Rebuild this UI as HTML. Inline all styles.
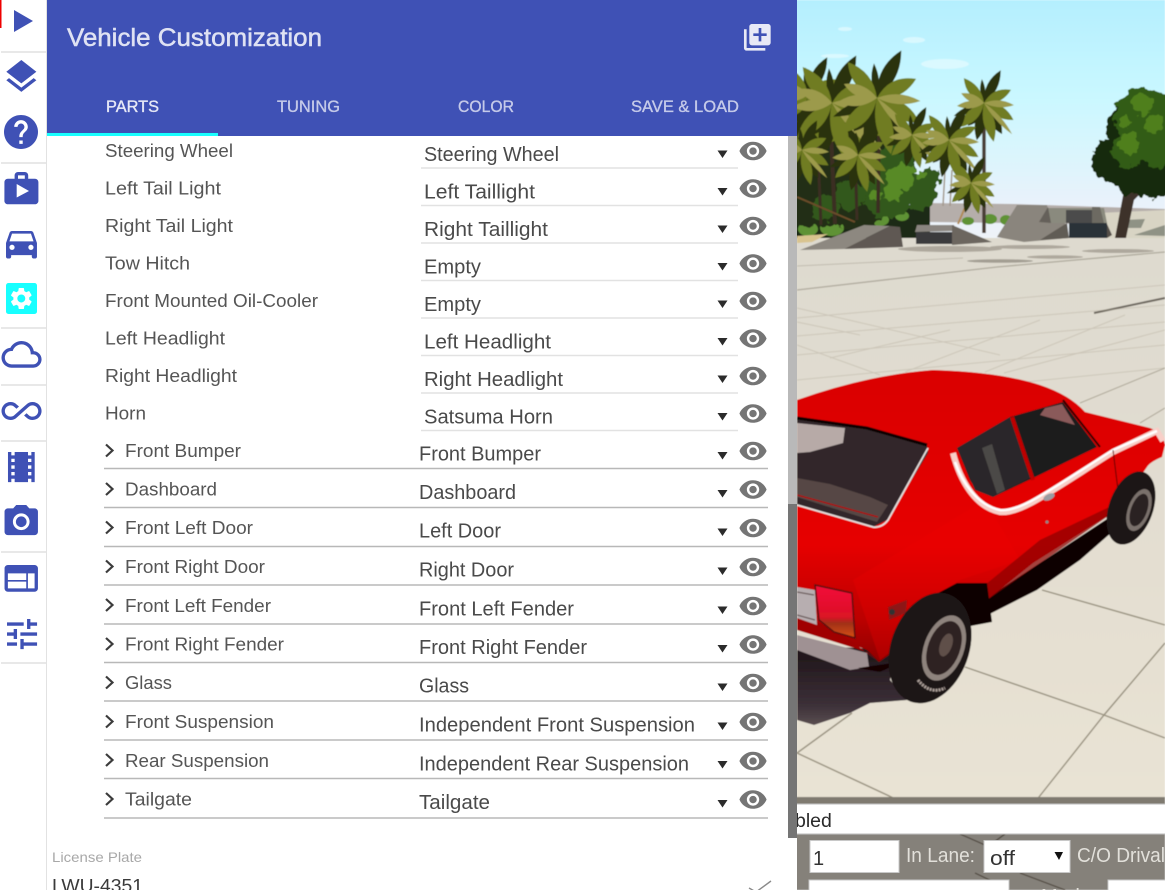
<!DOCTYPE html>
<html><head><meta charset="utf-8"><title>Vehicle Customization</title>
<style>
html,body{margin:0;padding:0;background:#fff;width:1165px;height:890px;overflow:hidden}
svg{display:block}
text{font-family:"Liberation Sans",Arial,sans-serif}
.l{font-size:18.6px;fill:#555}
.v{font-size:20px;fill:#4a4a4a}
.t{font-size:17px;fill:#c5cae9;stroke:#c5cae9;stroke-width:.35}
.i{fill:#3f51b5}
.a{fill:#2b2b2b}
.ln{stroke:#b8b8b8;stroke-width:1.5}
.ls{stroke:#e2e2e2;stroke-width:1.5}
.c{fill:none;stroke:#3c3c3c;stroke-width:2.2}
</style></head><body>
<svg width="1165" height="890" viewBox="0 0 1165 890" xmlns="http://www.w3.org/2000/svg">
<defs>
<linearGradient id="sky" x1="0" y1="0" x2="0" y2="1"><stop offset="0" stop-color="#b4effe"/><stop offset=".42" stop-color="#cbf8ff"/><stop offset=".85" stop-color="#e9f2fb"/><stop offset="1" stop-color="#eef3f8"/></linearGradient>
<linearGradient id="gr" x1="0" y1="0" x2="0" y2="1"><stop offset="0" stop-color="#dedacf"/><stop offset=".35" stop-color="#e1dcd0"/><stop offset="1" stop-color="#e9e3d4"/></linearGradient>
<linearGradient id="red" x1="0" y1="0" x2="0" y2="1"><stop offset="0" stop-color="#da0000"/><stop offset=".6" stop-color="#e60000"/><stop offset=".85" stop-color="#bc0000"/><stop offset="1" stop-color="#8e0000"/></linearGradient>
<linearGradient id="tl" x1="0" y1="0" x2="0" y2="1"><stop offset="0" stop-color="#f2103a"/><stop offset=".6" stop-color="#dc1226"/><stop offset=".72" stop-color="#a03018"/><stop offset="1" stop-color="#d85010"/></linearGradient>
<linearGradient id="sh" x1="0" y1="0" x2="0" y2="1"><stop offset="0" stop-color="#1c1216"/><stop offset=".75" stop-color="#3c3038"/><stop offset="1" stop-color="#5a4e50"/></linearGradient>
<filter id="soft" x="0" y="0" width="1" height="1"><feGaussianBlur stdDeviation=".6"/></filter>
<filter id="rough" filterUnits="userSpaceOnUse" x="780" y="40" width="400" height="210"><feTurbulence type="fractalNoise" baseFrequency=".14" numOctaves="2" seed="4"/><feDisplacementMap in="SourceGraphic" scale="11" xChannelSelector="R" yChannelSelector="G"/></filter>
<g id="eye"><path transform="translate(-14.8,-14.8) scale(1.235)" fill="#757575" d="M12 4.5C7 4.5 2.73 7.61 1 12c1.73 4.39 6 7.5 11 7.5s9.27-3.11 11-7.5c-1.73-4.39-6-7.5-11-7.5zM12 17c-2.76 0-5-2.24-5-5s2.24-5 5-5 5 2.24 5 5-2.24 5-5 5zm0-8c-1.66 0-3 1.34-3 3s1.34 3 3 3 3-1.34 3-3-1.34-3-3-3z"/></g>
<path id="f" d="M0 0Q20 -9 40 0Q20 8 0 0Z"/>
<g id="palm">
<g fill="#2a3110">
<use href="#f" transform="rotate(-63) scale(.92,1.2)"/><use href="#f" transform="rotate(157) scale(.82)"/><use href="#f" transform="rotate(101) scale(.95,1.3)"/><use href="#f" transform="rotate(60) scale(.9,1.3)"/><use href="#f" transform="rotate(-95) scale(.6)"/><use href="#f" transform="rotate(125) scale(.7,1.3)"/>
</g>
<g fill="#6f7c22">
<use href="#f" transform="rotate(-26) scale(.75,1.2)"/><use href="#f" transform="rotate(30) scale(.85,1.3)"/><use href="#f" transform="rotate(-129) scale(.8,1.2)"/><use href="#f" transform="rotate(76) scale(1,1.3)"/><use href="#f" transform="rotate(135) scale(.85,1.3)"/>
</g>
<g fill="#9c9a4c">
<use href="#f" transform="rotate(4) scale(.75,.8)"/><use href="#f" transform="rotate(174) scale(.68,.9)"/><use href="#f" transform="rotate(-157) scale(.62,.9)"/><use href="#f" transform="rotate(48) scale(1.05,.6)"/>
</g>
</g>
</defs>

<!-- scene -->
<g filter="url(#soft)">
<rect x="790" y="0" width="375" height="240" fill="url(#sky)"/>
<g fill="#e3fbff" opacity=".75"><ellipse cx="845" cy="29" rx="7" ry="2"/><ellipse cx="914" cy="40" rx="11" ry="3"/><ellipse cx="835" cy="56" rx="14" ry="2"/><ellipse cx="945" cy="64" rx="24" ry="5"/></g>
<polygon points="928,203 1014,204 1165,209 1165,225 928,222" fill="#b5aeaa"/>
<polygon points="1075,214 1165,210 1165,242 1075,242" fill="#d8d4c4"/>
<polygon points="1124,220 1145,219 1141,228 1120,228" fill="#8f9285"/>
<polygon points="1134,235 1165,225 1165,236" fill="#8f9285"/>
<rect x="790" y="238" width="375" height="565" fill="url(#gr)"/>

<!-- forest mass -->
<g fill="#1f2a14"><rect x="790" y="205" width="140" height="33"/></g>
<g fill="#5f9234">
<ellipse cx="808" cy="229" rx="10" ry="7"/><ellipse cx="832" cy="228" rx="12" ry="8"/><ellipse cx="858" cy="222" rx="8" ry="6"/><ellipse cx="880" cy="220" rx="9" ry="6"/><ellipse cx="902" cy="216" rx="7" ry="5"/><ellipse cx="968" cy="221" rx="6" ry="4"/><ellipse cx="990" cy="219" rx="7" ry="5"/><ellipse cx="1006" cy="220" rx="6" ry="5"/>
</g>
<polygon points="797,236 828,234 812,242 797,243" fill="#d9c48f"/>
<g filter="url(#rough)">
<g fill="#232e16">
<rect x="790" y="110" width="60" height="115"/>
<circle cx="830" cy="140" r="36"/><circle cx="870" cy="150" r="36"/><circle cx="815" cy="195" r="32"/><circle cx="855" cy="198" r="32"/><circle cx="900" cy="150" r="20"/>
</g>
<g fill="#33581a">
<circle cx="895" cy="165" r="20"/><circle cx="888" cy="192" r="26"/><circle cx="918" cy="192" r="18"/><circle cx="850" cy="195" r="15"/><circle cx="825" cy="208" r="13"/><circle cx="930" cy="178" r="10"/>
</g>
<g fill="#588a28">
<circle cx="900" cy="178" r="14"/><circle cx="893" cy="192" r="9"/><circle cx="908" cy="172" r="7"/><circle cx="875" cy="196" r="6"/><circle cx="922" cy="175" r="4"/>
</g>
</g>
<!-- trunks -->
<g stroke="#3b2e20" fill="none">
<path d="M830 110L835 224" stroke-width="4"/><path d="M879 130L878 213" stroke-width="3.5"/><path d="M817 130L821 225" stroke-width="3"/><path d="M855 150L857 220" stroke-width="3"/>
<path d="M984 120L984 233" stroke-width="3.5" stroke="#4a3e34"/>
<path d="M945 170L943 206M952 170L950 206" stroke-width="1.5" stroke="#a3998c"/><path d="M966 205L958 224" stroke-width="2" stroke="#b08a56"/>
<path d="M797 197L855 222" stroke-width="2" stroke="#6a4c2a"/>
</g>
<use href="#palm" transform="translate(800,112) scale(1)"/>
<use href="#palm" transform="translate(852,118) scale(1.05)"/>
<use href="#palm" transform="translate(808,95) scale(1.15)"/>
<use href="#palm" transform="translate(832,103) scale(1.45)"/>
<use href="#palm" transform="translate(877,98) scale(1.45)"/>
<use href="#palm" transform="translate(802,150) scale(.9)"/>
<use href="#palm" transform="translate(858,155) scale(.95)"/>
<use href="#palm" transform="translate(912,135) scale(.85)"/>
<use href="#palm" transform="translate(984,103) scale(1)"/>
<use href="#palm" transform="translate(949,140) scale(1)"/>
<use href="#palm" transform="translate(971,183) scale(.8)"/>
<!-- right tree -->
<path d="M1126 180L1115 238L1126 238L1134 200L1146 188Z" fill="#3e332b"/>
<g filter="url(#rough)">
<g fill="#182a0a"><circle cx="1116" cy="160" r="24"/><circle cx="1150" cy="172" r="26"/><circle cx="1140" cy="130" r="34"/><circle cx="1128" cy="180" r="14"/><circle cx="1164" cy="135" r="30"/></g>
<g fill="#335c14"><circle cx="1144" cy="118" r="30"/><circle cx="1128" cy="150" r="17"/><circle cx="1158" cy="150" r="18"/></g>
<g fill="#4f7f1f"><circle cx="1130" cy="143" r="11"/><circle cx="1142" cy="104" r="11"/><circle cx="1154" cy="125" r="9"/><circle cx="1125" cy="122" r="6"/></g>
</g>
<!-- ramps -->
<polygon points="800,250 864,225 890,226 844,249" fill="#8d8880"/>
<polygon points="844,249 890,226 900,227 903,247" fill="#5e5853"/>
<polygon points="917,225 954,225 955,231 915,232" fill="#8a8580"/>
<polygon points="916,232 952,232 952,244 916,244" fill="#3a3a3e"/>
<polygon points="952,225 992,242 952,245" fill="#6c665f"/>
<polygon points="1047,208 1104,208 1107,223 1050,223" fill="#8a8a7e"/>
<rect x="1066" y="210" width="26" height="13" fill="#4b4b4c"/>
<polygon points="1092,207 1100,207 1104,223 1092,223" fill="#6d6a62"/>
<rect x="1069" y="223" width="38" height="15" fill="#2b3038"/>
<polygon points="1107,224 1112,235 1107,238" fill="#55504a"/>
<polygon points="997,237 1017,205 1047,205 1050,223 1065,223 1069,238 1024,242" fill="#8a857d"/>
<polygon points="1039,222 1048,207 1051,223" fill="#65605a"/>
<polygon points="1040,240 1067,223 1069,238" fill="#615c55"/>
<g fill="#9a9488" opacity=".7"><ellipse cx="950" cy="249" rx="52" ry="3"/><ellipse cx="1030" cy="247" rx="40" ry="2"/><ellipse cx="1000" cy="261" rx="33" ry="1.8" fill="#8b867b"/><ellipse cx="1055" cy="257" rx="28" ry="1.8"/><ellipse cx="1118" cy="251" rx="36" ry="2"/></g>
<!-- far lines -->
<g fill="none" stroke="#a39d90">
<path d="M797 290L997 267L1165 252" stroke-width="1.3" opacity=".8"/>
<path d="M797 266L963 258" stroke-width="1" opacity=".5"/>
<path d="M1094 313L1165 298" stroke="#6d685e" stroke-width="2"/>
</g>
<g fill="none" stroke="#b0a999" stroke-width="1" opacity=".4">
<path d="M797 318L1165 285M797 336L1165 305M797 355L1165 322M797 380L1165 345M797 405L1165 368M880 375L797 345M1000 355L797 308"/>
<path d="M860 335L797 322M950 330L830 358M1040 320L905 372M1125 315L985 372M1165 330L1004 373"/>
</g>
<g fill="none" stroke="#9d9686" stroke-width="1.1" opacity=".7"><path d="M1080 403L1165 368M1140 423L1165 408"/></g>
<!-- lower tiles -->
<g stroke="#8a8270" stroke-width="1.4" fill="none" opacity=".85">
<path d="M1042 590L1165 625M965 667L1104 715L1165 738M1165 643L1104 715L1035 802M852 713L797 753L902 802"/>
</g>
<!-- shadow -->
<polygon points="797,645 895,650 890,680 907,700 870,703 850,713 814,725 797,720" fill="url(#sh)"/>
<polygon points="987,598 1040,563 1110,517 1120,525 1080,560 1037,590 972,623 960,605" fill="#0c0303"/>
<!-- car -->
<path d="M797 400Q867 375 933 370Q1000 372 1040 385Q1070 395 1085 412L1150 428Q1163 433 1165 445L1162 457Q1150 462 1147 467L1117 510L1033 563L987 600L984 583L957 583L930 605L910 640L879 662L867 650L797 623Z" fill="url(#red)"/>
<polygon points="797,610 850,640 879,662 867,652 797,630" fill="#a00000"/>
<polygon points="853,580 985,500 1020,560 960,580 930,600 905,640 880,660" fill="#f00000" opacity=".3"/>
<polygon points="987,600 1117,510 1124,500 1040,540 985,585" fill="#8a0000" opacity=".7"/>
<polygon points="925,600 957,583 987,583 992,622 960,628" fill="#090202"/>
<!-- rear window -->
<polygon points="797,418 867,428 927,445 928,453 887,520 873,527 797,505" fill="#30282a"/>
<polygon points="797,423 845,428 843,443 810,452 797,453" fill="#b7aaa7"/>
<polygon points="797,478 830,484 870,497 888,505 877,522 797,497" fill="#564744"/>
<path d="M797 495L878 517" stroke="#b00000" stroke-width="1.3"/>
<path d="M797 418L867 428L927 445" stroke="#0c0606" stroke-width="3" fill="none"/>
<path d="M928 448L888 520Q882 528 873 527L797 505" stroke="#e5dfdd" stroke-width="1.8" fill="none"/>
<!-- side window -->
<path d="M957 448L1010 417L1063 402L1097 447L1033 478L993 497Q975 490 970 480Z" fill="#1f1a1b"/>
<polygon points="957,448 1010,417 1030,478 993,497 975,490" fill="#2c2829"/>
<polygon points="982,448 992,444 1005,490 997,494" fill="#4c4846"/>
<polygon points="1045,408 1062,404 1075,425 1040,415" fill="#8a5a5a"/>
<path d="M1012 417L1033 480" stroke="#bf0000" stroke-width="4"/>
<path d="M1063 400L1100 447" stroke="#2a0000" stroke-width="2"/>
<!-- stripe -->
<path d="M953 453C960 480 975 507 1000 512C1020 514 1045 495 1113 452L1157 431L1163 441" fill="none" stroke="#f8cfc8" stroke-width="6"/>
<path d="M955 462C962 482 977 505 1000 510C1020 512 1045 493 1113 450L1157 431" fill="none" stroke="#fff" stroke-width="2.5"/>
<path d="M1113 450L1118 490L1115 510" fill="none" stroke="#5a0000" stroke-width="1"/>
<ellipse cx="1049" cy="497" rx="6" ry="3" transform="rotate(-25 1049 497)" fill="#9a9aa0"/>
<circle cx="1047" cy="522" r="1.5" fill="#888"/>
<!-- rear -->
<polygon points="797,587 815,590 817,625 797,618" fill="#b7aeb0"/>
<path d="M797 592L814 595M797 615L815 620" stroke="#6a5a5a" stroke-width="1.2"/>
<polygon points="815,585 852,593 855,638 834,632 819,620" fill="url(#tl)" stroke="#5a1010" stroke-width="1.5"/>
<polygon points="797,635 867,653 869,667 850,670 797,650" fill="#9f9193"/>
<polygon points="888,607 907,600 906,613 889,620" fill="#8d1515"/>
<circle cx="892" cy="612" r="3" fill="#333"/>
<polygon points="858,668 900,662 911,643 905,660 880,672" fill="#130404"/>
<!-- wheels -->
<ellipse cx="930" cy="648" rx="39" ry="57" transform="rotate(20 930 648)" fill="#1c1212"/>
<ellipse cx="944" cy="648" rx="20" ry="34" transform="rotate(20 944 648)" fill="#8e837d"/>
<ellipse cx="944" cy="648" rx="16" ry="28" transform="rotate(20 944 648)" fill="#2e2120"/>
<ellipse cx="946" cy="645" rx="6" ry="12" transform="rotate(20 946 645)" fill="#5e4f4a"/>
<path d="M918 680Q930 695 945 688" stroke="#a89c96" stroke-width="3" fill="none" stroke-dasharray="2 1"/>
<ellipse cx="1131" cy="508" rx="22" ry="38" transform="rotate(20 1131 508)" fill="#1d1515"/>
<ellipse cx="1139" cy="510" rx="11" ry="22" transform="rotate(20 1139 510)" fill="#7a716c"/>
<ellipse cx="1139" cy="510" rx="8" ry="17" transform="rotate(20 1139 510)" fill="#2c2424"/>
<!-- lower grey -->
<rect x="790" y="797" width="375" height="7" fill="#7f7a70"/>
<rect x="790" y="834" width="375" height="56" fill="#85817a"/>
<g stroke="#4a4238" stroke-width="1.2" fill="none"><path d="M960 834L985 845M1005 834L990 845M975 873L1000 885M1020 873L1065 890"/></g>
</g>

<!-- page controls on scene -->
<rect x="790" y="804" width="375" height="30" fill="#fff"/>
<path d="M790 804H1165M790 834H1165" stroke="#bbb" stroke-width="1"/>
<text x="756" y="827" font-size="19.5" fill="#2a2a2a">Disabled</text>
<rect x="810" y="840.5" width="89" height="32" fill="#fff" stroke="#c8c8c8"/>
<text x="813" y="865" font-size="20" fill="#333">1</text>
<text x="906" y="862" font-size="20" fill="#e2e0da" textLength="69" lengthAdjust="spacingAndGlyphs">In Lane:</text>
<rect x="984" y="840.5" width="86" height="32" fill="#fff" stroke="#c8c8c8"/>
<text x="990" y="865" font-size="20" fill="#333" textLength="25" lengthAdjust="spacingAndGlyphs">off</text>
<polygon points="1054.5,852 1063,852 1059,860" fill="#111"/>
<text x="1077" y="862" font-size="20" fill="#e2e0da" textLength="88" lengthAdjust="spacingAndGlyphs">C/O Drival</text>
<rect x="809" y="880" width="200" height="12" fill="#fff" stroke="#c8c8c8"/>
<text x="1041" y="903" font-size="20" fill="#e2e0da">Mode:</text>
<rect x="1108" y="880" width="60" height="12" fill="#fff" stroke="#c8c8c8"/>

<!-- panel -->
<rect x="47" y="0" width="750" height="890" fill="#fff"/>
<rect x="47" y="0" width="750" height="136" fill="#3f51b5"/>
<text x="67" y="46" font-size="25" fill="#dfe2f3" stroke="#dfe2f3" stroke-width=".5" textLength="255" lengthAdjust="spacingAndGlyphs">Vehicle Customization</text>
<path transform="translate(741.3,21.3) scale(1.335)" fill="#e8e9f6" d="M4 6H2v14c0 1.1.9 2 2 2h14v-2H4V6zm16-4H8c-1.1 0-2 .9-2 2v12c0 1.1.9 2 2 2h12c1.1 0 2-.9 2-2V4c0-1.1-.9-2-2-2zm-1 9h-4v4h-2v-4H9V9h4V5h2v4h4v2z"/>
<text x="106" y="112" class="t" style="fill:#e6e8f6;stroke:#e6e8f6" textLength="53" lengthAdjust="spacingAndGlyphs">PARTS</text>
<text x="277" y="112" class="t" textLength="63" lengthAdjust="spacingAndGlyphs">TUNING</text>
<text x="458" y="112" class="t" textLength="56" lengthAdjust="spacingAndGlyphs">COLOR</text>
<text x="631" y="112" class="t" textLength="108" lengthAdjust="spacingAndGlyphs">SAVE &amp; LOAD</text>
<rect x="47" y="133" width="171" height="3" fill="#18ffff"/>

<!-- scrollbar -->
<rect x="788" y="136" width="9" height="368" fill="#b9b9b9"/>
<rect x="788" y="504" width="9" height="334" fill="#757575"/>

<!-- simple rows -->
<text x="105" y="157" class="l" textLength="128" lengthAdjust="spacingAndGlyphs">Steering Wheel</text>
<text x="105" y="194.5" class="l" textLength="116" lengthAdjust="spacingAndGlyphs">Left Tail Light</text>
<text x="105" y="232" class="l" textLength="128" lengthAdjust="spacingAndGlyphs">Right Tail Light</text>
<text x="105" y="269.5" class="l" textLength="85" lengthAdjust="spacingAndGlyphs">Tow Hitch</text>
<text x="105" y="307" class="l" textLength="213" lengthAdjust="spacingAndGlyphs">Front Mounted Oil-Cooler</text>
<text x="105" y="344.5" class="l" textLength="120" lengthAdjust="spacingAndGlyphs">Left Headlight</text>
<text x="105" y="382" class="l" textLength="132" lengthAdjust="spacingAndGlyphs">Right Headlight</text>
<text x="105" y="419.5" class="l" textLength="41" lengthAdjust="spacingAndGlyphs">Horn</text>

<text x="424" y="161" class="v" textLength="135" lengthAdjust="spacingAndGlyphs">Steering Wheel</text>
<text x="424" y="198.5" class="v" textLength="111" lengthAdjust="spacingAndGlyphs">Left Taillight</text>
<text x="424" y="236" class="v" textLength="124" lengthAdjust="spacingAndGlyphs">Right Taillight</text>
<text x="424" y="273.5" class="v" textLength="57" lengthAdjust="spacingAndGlyphs">Empty</text>
<text x="424" y="311" class="v" textLength="57" lengthAdjust="spacingAndGlyphs">Empty</text>
<text x="424" y="348.5" class="v" textLength="127" lengthAdjust="spacingAndGlyphs">Left Headlight</text>
<text x="424" y="386" class="v" textLength="139" lengthAdjust="spacingAndGlyphs">Right Headlight</text>
<text x="424" y="423.5" class="v" textLength="129" lengthAdjust="spacingAndGlyphs">Satsuma Horn</text>

<path class="ls" d="M421 168H738M421 205.5H738M421 243H738M421 280.5H738M421 318H738M421 355.5H738M421 393H738M421 430.5H738"/>

<!-- expansion rows -->
<text x="125" y="457" class="l" textLength="116" lengthAdjust="spacingAndGlyphs">Front Bumper</text>
<text x="125" y="495.5" class="l" textLength="92" lengthAdjust="spacingAndGlyphs">Dashboard</text>
<text x="125" y="534" class="l" textLength="128" lengthAdjust="spacingAndGlyphs">Front Left Door</text>
<text x="125" y="573" class="l" textLength="140" lengthAdjust="spacingAndGlyphs">Front Right Door</text>
<text x="125" y="612" class="l" textLength="146" lengthAdjust="spacingAndGlyphs">Front Left Fender</text>
<text x="125" y="650.5" class="l" textLength="159" lengthAdjust="spacingAndGlyphs">Front Right Fender</text>
<text x="125" y="689" class="l" textLength="47" lengthAdjust="spacingAndGlyphs">Glass</text>
<text x="125" y="728" class="l" textLength="149" lengthAdjust="spacingAndGlyphs">Front Suspension</text>
<text x="125" y="767" class="l" textLength="144" lengthAdjust="spacingAndGlyphs">Rear Suspension</text>
<text x="125" y="805.5" class="l" textLength="67" lengthAdjust="spacingAndGlyphs">Tailgate</text>

<text x="419" y="460.5" class="v" textLength="122" lengthAdjust="spacingAndGlyphs">Front Bumper</text>
<text x="419" y="499" class="v" textLength="97" lengthAdjust="spacingAndGlyphs">Dashboard</text>
<text x="419" y="537.5" class="v" textLength="82" lengthAdjust="spacingAndGlyphs">Left Door</text>
<text x="419" y="576.5" class="v" textLength="95" lengthAdjust="spacingAndGlyphs">Right Door</text>
<text x="419" y="615.5" class="v" textLength="155" lengthAdjust="spacingAndGlyphs">Front Left Fender</text>
<text x="419" y="654" class="v" textLength="168" lengthAdjust="spacingAndGlyphs">Front Right Fender</text>
<text x="419" y="692.5" class="v" textLength="50" lengthAdjust="spacingAndGlyphs">Glass</text>
<text x="419" y="731.5" class="v" textLength="276" lengthAdjust="spacingAndGlyphs">Independent Front Suspension</text>
<text x="419" y="770.5" class="v" textLength="270" lengthAdjust="spacingAndGlyphs">Independent Rear Suspension</text>
<text x="419" y="809" class="v" textLength="71" lengthAdjust="spacingAndGlyphs">Tailgate</text>

<path class="ln" d="M104 468.5H768M104 507.5H768M104 546.5H768M104 585H768M104 624H768M104 662.5H768M104 701H768M104 740H768M104 778.5H768M104 818H768"/>

<g class="c">
<polyline points="106,444.5 112.5,450.5 106,456.5"/>
<polyline points="106,483 112.5,489 106,495"/>
<polyline points="106,521.5 112.5,527.5 106,533.5"/>
<polyline points="106,560.5 112.5,566.5 106,572.5"/>
<polyline points="106,599 112.5,605 106,611"/>
<polyline points="106,638 112.5,644 106,650"/>
<polyline points="106,676.5 112.5,682.5 106,688.5"/>
<polyline points="106,715.5 112.5,721.5 106,727.5"/>
<polyline points="106,754 112.5,760 106,766"/>
<polyline points="106,793 112.5,799 106,805"/>
</g>

<!-- arrows -->
<g class="a">
<polygon points="717.5,150.5 727.5,150.5 722.5,158"/>
<polygon points="717.5,188 727.5,188 722.5,195.5"/>
<polygon points="717.5,225.5 727.5,225.5 722.5,233"/>
<polygon points="717.5,263 727.5,263 722.5,270.5"/>
<polygon points="717.5,300.5 727.5,300.5 722.5,308"/>
<polygon points="717.5,338 727.5,338 722.5,345.5"/>
<polygon points="717.5,375.5 727.5,375.5 722.5,383"/>
<polygon points="717.5,413 727.5,413 722.5,420.5"/>
<polygon points="717.5,452 727.5,452 722.5,459.5"/>
<polygon points="717.5,490 727.5,490 722.5,497.5"/>
<polygon points="717.5,528.5 727.5,528.5 722.5,536"/>
<polygon points="717.5,567.5 727.5,567.5 722.5,575"/>
<polygon points="717.5,606.5 727.5,606.5 722.5,614"/>
<polygon points="717.5,645 727.5,645 722.5,652.5"/>
<polygon points="717.5,683.5 727.5,683.5 722.5,691"/>
<polygon points="717.5,722.5 727.5,722.5 722.5,730"/>
<polygon points="717.5,761 727.5,761 722.5,768.5"/>
<polygon points="717.5,800 727.5,800 722.5,807.5"/>
</g>

<!-- eyes -->
<use href="#eye" x="753" y="151"/><use href="#eye" x="753" y="188.5"/><use href="#eye" x="753" y="226"/><use href="#eye" x="753" y="263.5"/><use href="#eye" x="753" y="301"/><use href="#eye" x="753" y="338.5"/><use href="#eye" x="753" y="376"/><use href="#eye" x="753" y="413.5"/>
<use href="#eye" x="753" y="451"/><use href="#eye" x="753" y="489.5"/><use href="#eye" x="753" y="528"/><use href="#eye" x="753" y="567"/><use href="#eye" x="753" y="606"/><use href="#eye" x="753" y="644.5"/><use href="#eye" x="753" y="683"/><use href="#eye" x="753" y="722"/><use href="#eye" x="753" y="761"/><use href="#eye" x="753" y="799.5"/>

<!-- license plate -->
<text x="52" y="862" font-size="14" fill="#a8a8a8" textLength="90" lengthAdjust="spacingAndGlyphs">License Plate</text>
<text x="52" y="892" font-size="18.6" fill="#3a3a3a" textLength="91" lengthAdjust="spacingAndGlyphs">LWU-4351</text>
<path d="M749 888L756 892L771 881" fill="none" stroke="#8a8a8a" stroke-width="1.4"/>

<!-- sidebar -->
<rect x="0" y="0" width="46" height="890" fill="#fff"/>
<rect x="46" y="0" width="1" height="890" fill="#e2e2e2"/>
<rect x="0" y="0" width="1.5" height="28" fill="#ee0000"/>
<path d="M1 52H46M1 163H46M1 328H46M1 385H46M1 441H46M1 552H46M1 663H46" stroke="#e0e0e0" stroke-width="1.5"/>
<polygon class="i" points="14,10 33,21 14,32"/>
<path class="i" transform="translate(1.3,56.7) scale(1.67)" d="M11.99 18.54l-7.37-5.73L3 14.07l9 7 9-7-1.63-1.27-7.38 5.74zM12 16l7.36-5.73L21 9l-9-7-9 7 1.63 1.27L12 16z"/>
<path class="i" transform="translate(.6,111.6) scale(1.7)" d="M12 2C6.48 2 2 6.48 2 12s4.48 10 10 10 10-4.48 10-10S17.52 2 12 2zm1 17h-2v-2h2v2zm2.07-7.75l-.9.92C13.45 12.9 13 13.5 13 15h-2v-.5c0-1.1.45-2.1 1.17-2.83l1.24-1.26c.37-.36.59-.86.59-1.41 0-1.1-.9-2-2-2s-2 .9-2 2H8c0-2.21 1.79-4 4-4s4 1.79 4 4c0 .88-.36 1.68-.93 2.25z"/>
<path class="i" transform="translate(1,168.6) scale(1.7)" d="M20 6h-4V4c0-1.11-.89-2-2-2h-4c-1.11 0-2 .89-2 2v2H4c-1.11 0-1.99.89-1.99 2L2 19c0 1.11.89 2 2 2h16c1.11 0 2-.89 2-2V8c0-1.11-.89-2-2-2zm-10-2h4v2h-4V4z"/>
<polygon points="16.7,184 29,191 16.7,197.5" fill="#fff"/>
<path class="i" transform="translate(.84,222.4) scale(1.72)" d="M18.92 6.01C18.72 5.42 18.16 5 17.5 5h-11c-.66 0-1.21.42-1.42 1.01L3 12v8c0 .55.45 1 1 1h1c.55 0 1-.45 1-1v-1h12v1c0 .55.45 1 1 1h1c.55 0 1-.45 1-1v-8l-2.08-5.99zM6.5 16c-.83 0-1.5-.67-1.5-1.5S5.67 13 6.5 13s1.5.67 1.5 1.5S7.33 16 6.5 16zm11 0c-.83 0-1.5-.67-1.5-1.5s.67-1.5 1.5-1.5 1.5.67 1.5 1.5-.67 1.5-1.5 1.5zM5 11l1.5-4.5h11L19 11H5z"/>
<rect x="6" y="283" width="31" height="31" rx="2.5" fill="#18ffff"/>
<path transform="translate(8.1,285.3) scale(1.1)" fill="#fff" fill-rule="evenodd" d="M19.14,12.94c0.04-0.3,0.06-0.61,0.06-0.94c0-0.32-0.02-0.64-0.07-0.94l2.03-1.58c0.18-0.14,0.23-0.41,0.12-0.61 l-1.92-3.32c-0.12-0.22-0.37-0.29-0.59-0.22l-2.39,0.96c-0.5-0.38-1.03-0.7-1.62-0.94L14.4,2.81c-0.04-0.24-0.24-0.41-0.48-0.41 h-3.84c-0.24,0-0.43,0.17-0.47,0.41L9.25,5.35C8.66,5.59,8.12,5.92,7.63,6.29L5.24,5.33c-0.22-0.08-0.47,0-0.59,0.22L2.74,8.87 C2.62,9.08,2.66,9.34,2.86,9.48l2.03,1.58C4.84,11.36,4.8,11.69,4.8,12s0.02,0.64,0.07,0.94l-2.03,1.58 c-0.18,0.14-0.23,0.41-0.12,0.61l1.92,3.32c0.12,0.22,0.37,0.29,0.59,0.22l2.39-0.96c0.5,0.38,1.03,0.7,1.62,0.94l0.36,2.54 c0.05,0.24,0.24,0.41,0.48,0.41h3.84c0.24,0,0.44-0.17,0.47-0.41l0.36-2.54c0.59-0.24,1.13-0.56,1.62-0.94l2.39,0.96 c0.22,0.08,0.47,0,0.59-0.22l1.92-3.32c0.12-0.22,0.07-0.47-0.12-0.61L19.14,12.94z M12,15.6c-1.98,0-3.6-1.62-3.6-3.6 s1.62-3.6,3.6-3.6s3.6,1.62,3.6,3.6S13.98,15.6,12,15.6z"/>
<path class="i" transform="translate(1.5,334.3) scale(1.67)" d="M19.35 10.04C18.67 6.59 15.64 4 12 4 9.11 4 6.6 5.64 5.35 8.04 2.34 8.36 0 10.91 0 14c0 3.31 2.69 6 6 6h13c2.76 0 5-2.24 5-5 0-2.64-2.05-4.78-4.65-4.96zM19 18H6c-2.21 0-4-1.79-4-4s1.79-4 4-4h.71C7.37 7.69 9.48 6 12 6c3.04 0 5.5 2.46 5.5 5.5v.5H19c1.66 0 3 1.34 3 3s-1.34 3-3 3z"/>
<path class="i" transform="translate(1.5,391) scale(1.67)" d="M18.6 6.62c-1.44 0-2.8.56-3.77 1.53L12 10.66 10.48 12h.01L7.8 14.39c-.64.64-1.49.99-2.4.99-1.87 0-3.39-1.51-3.39-3.38S3.53 8.62 5.4 8.62c.91 0 1.76.35 2.44 1.03l1.13 1 1.51-1.34L9.22 8.2C8.2 7.18 6.84 6.62 5.4 6.62 2.42 6.62 0 9.04 0 12s2.42 5.38 5.4 5.38c1.44 0 2.8-.56 3.77-1.53l2.83-2.5.01.01L13.52 12h-.01l2.69-2.39c.64-.64 1.49-.99 2.4-.99 1.87 0 3.39 1.51 3.39 3.38s-1.52 3.38-3.39 3.38c-.9 0-1.76-.35-2.44-1.03l-1.14-1.01-1.51 1.34 1.27 1.12c1.02 1.01 2.37 1.57 3.82 1.57 2.98 0 5.4-2.41 5.4-5.38s-2.42-5.37-5.4-5.37z"/>
<path class="i" transform="translate(1.3,447) scale(1.67)" d="M18 3v2h-2V3H8v2H6V3H4v18h2v-2h2v2h8v-2h2v2h2V3h-2zM8 17H6v-2h2v2zm0-4H6v-2h2v2zm0-4H6V7h2v2zm10 8h-2v-2h2v2zm0-4h-2v-2h2v2zm0-4h-2V7h2v2z"/>
<g class="i" transform="translate(1.2,501.7) scale(1.67)"><circle cx="12" cy="12" r="3.2"/><path d="M9 2L7.17 4H4c-1.1 0-2 .9-2 2v12c0 1.1.9 2 2 2h16c1.1 0 2-.9 2-2V6c0-1.1-.9-2-2-2h-3.17L15 2H9zm3 15c-2.76 0-5-2.24-5-5s2.24-5 5-5 5 2.24 5 5-2.24 5-5 5z"/></g>
<path class="i" transform="translate(1.2,558.3) scale(1.67)" d="M20 4H4c-1.1 0-1.99.9-1.99 2L2 18c0 1.1.9 2 2 2h16c1.1 0 2-.9 2-2V6c0-1.1-.9-2-2-2zm-5 14H4v-4h11v4zm0-5H4V9h11v4zm5 5h-4V9h4v9z"/>
<path class="i" transform="translate(2,614) scale(1.67)" d="M3 17v2h6v-2H3zM3 5v2h10V5H3zm10 16v-2h8v-2h-8v-2h-2v6h2zM7 9v2H3v2h4v2h2V9H7zm14 4v-2H11v2h10zm-6-4h2V7h4V5h-4V3h-2v6z"/>
</svg>
</body></html>
